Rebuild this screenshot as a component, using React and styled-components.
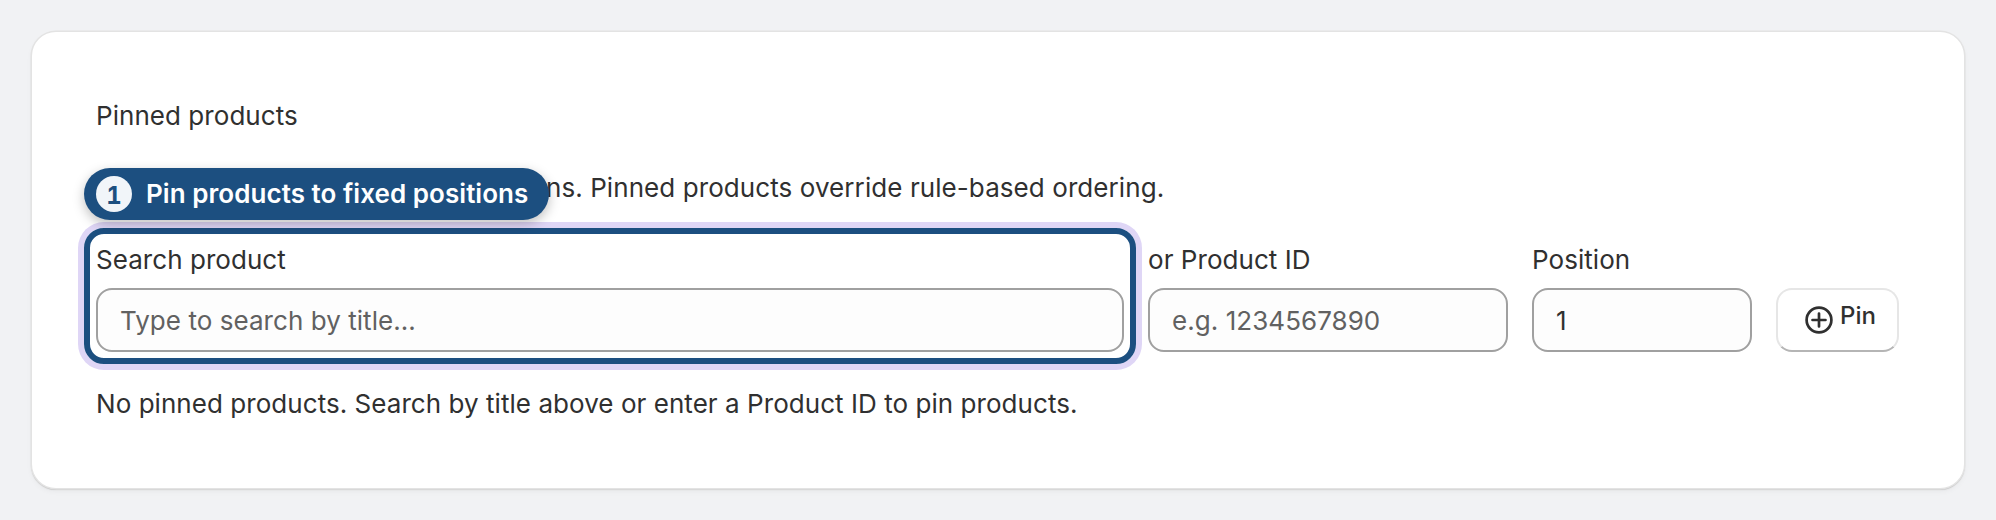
import React from 'react'
import styled, { createGlobalStyle } from 'styled-components'

const GlobalStyle = createGlobalStyle`
  body {
    margin: 0;
    background: #f1f2f4;
    font-family: Inter, "Liberation Sans", sans-serif;
    color: #303030;
    letter-spacing: 0.05px;
  }
`

const App = () => {
  return (
    <Page>
      <GlobalStyle />
      <Card>
        <Title>Pinned products</Title>
        <Description>
          Pin specific products to fixed positions. Pinned products override rule-based ordering.
          <TourPill>
            <StepNumber>1</StepNumber>
            Pin products to fixed positions
          </TourPill>
        </Description>
        <FormRow>
          <SearchField>
            <Label>Search product</Label>
            <Input placeholder="Type to search by title..." readOnly />
          </SearchField>
          <IdField>
            <Label>or Product ID</Label>
            <Input placeholder="e.g. 1234567890" readOnly />
          </IdField>
          <PositionField>
            <Label>Position</Label>
            <Input value="1" readOnly />
          </PositionField>
          <PinButton type="button">
            <svg width="28" height="28" viewBox="0 0 28 28" fill="none" stroke="#303030" strokeWidth="2.7">
              <circle cx="14" cy="14" r="12.4" />
              <path d="M14 7.5v13M7.5 14h13" strokeLinecap="round" />
            </svg>
            <span>Pin</span>
          </PinButton>
        </FormRow>
        <EmptyText>No pinned products. Search by title above or enter a Product ID to pin products.</EmptyText>
      </Card>
    </Page>
  )
}

export default App

const Page = styled.div`
  padding: 32px;
  height: 520px;
  box-sizing: border-box;
`

const Card = styled.div`
  display: flex;
  flex-direction: column;
  gap: 32px;
  height: 456px;
  box-sizing: border-box;
  padding: 64px 64px;
  background: #fff;
  border-radius: 24px;
  box-shadow: 0 0 0 1.5px #e3e3e3, 0 1.5px 1px 0.5px #c9c9c9, 0 3px 6px rgba(26, 26, 26, 0.05);
`

const Title = styled.div`
  font-size: 26px;
  line-height: 40px;
`

const Description = styled.div`
  position: relative;
  font-size: 26px;
  line-height: 40px;
  letter-spacing: 0.08px;
`

const TourPill = styled.div`
  position: absolute;
  left: -12px;
  top: 0;
  height: 52px;
  display: flex;
  align-items: center;
  gap: 14px;
  padding: 0 21px 0 12px;
  border-radius: 26px;
  background: #1c4f80;
  color: #fff;
  font-size: 26px;
  font-weight: 600;
  letter-spacing: 0.05px;
  white-space: nowrap;
  box-shadow: 0 4px 12px rgba(0, 0, 0, 0.25);
  z-index: 2;
`

const StepNumber = styled.span`
  width: 36px;
  height: 36px;
  border-radius: 50%;
  display: grid;
  place-items: center;
  background: #f1f5f9;
  color: #1c4f80;
  font-size: 24px;
  font-weight: 700;
  font-variant-numeric: tabular-nums;
`

const FormRow = styled.div`
  display: flex;
  align-items: flex-end;
  gap: 24px;
`

const Field = styled.div`
  display: flex;
  flex-direction: column;
  gap: 8px;
`

const SearchField = styled(Field)`
  position: relative;
  width: 1028px;

  &::after {
    content: '';
    position: absolute;
    inset: -12px;
    border: 6px solid #1c4f80;
    border-radius: 20px;
    box-shadow: 0 0 0 6px #dfd6f6;
    pointer-events: none;
  }
`

const IdField = styled(Field)`
  width: 360px;
`

const PositionField = styled(Field)`
  width: 220px;
`

const Label = styled.label`
  font-size: 26px;
  line-height: 40px;
`

const Input = styled.input`
  box-sizing: border-box;
  width: 100%;
  height: 64px;
  padding: 0 22px;
  border: 2px solid #a0a0a0;
  border-radius: 16px;
  background: #fdfdfd;
  color: #303030;
  font-family: inherit;
  font-size: 26px;
  letter-spacing: 0.05px;
  outline: none;

  &::placeholder {
    color: #616161;
    opacity: 1;
  }
`

const PinButton = styled.button`
  display: flex;
  align-items: center;
  justify-content: center;
  gap: 7px;
  width: 123px;
  height: 64px;
  padding: 0 0 0 6px;
  border: 2px solid #e6e6e6;
  border-bottom: 2px solid #b5b5b5;
  border-radius: 16px;
  background: #fff;
  color: #303030;
  font-family: inherit;
  font-size: 24px;
  font-weight: 550;

  span {
    margin-bottom: 10px;
  }
`

const EmptyText = styled.div`
  font-size: 26px;
  line-height: 40px;
`
